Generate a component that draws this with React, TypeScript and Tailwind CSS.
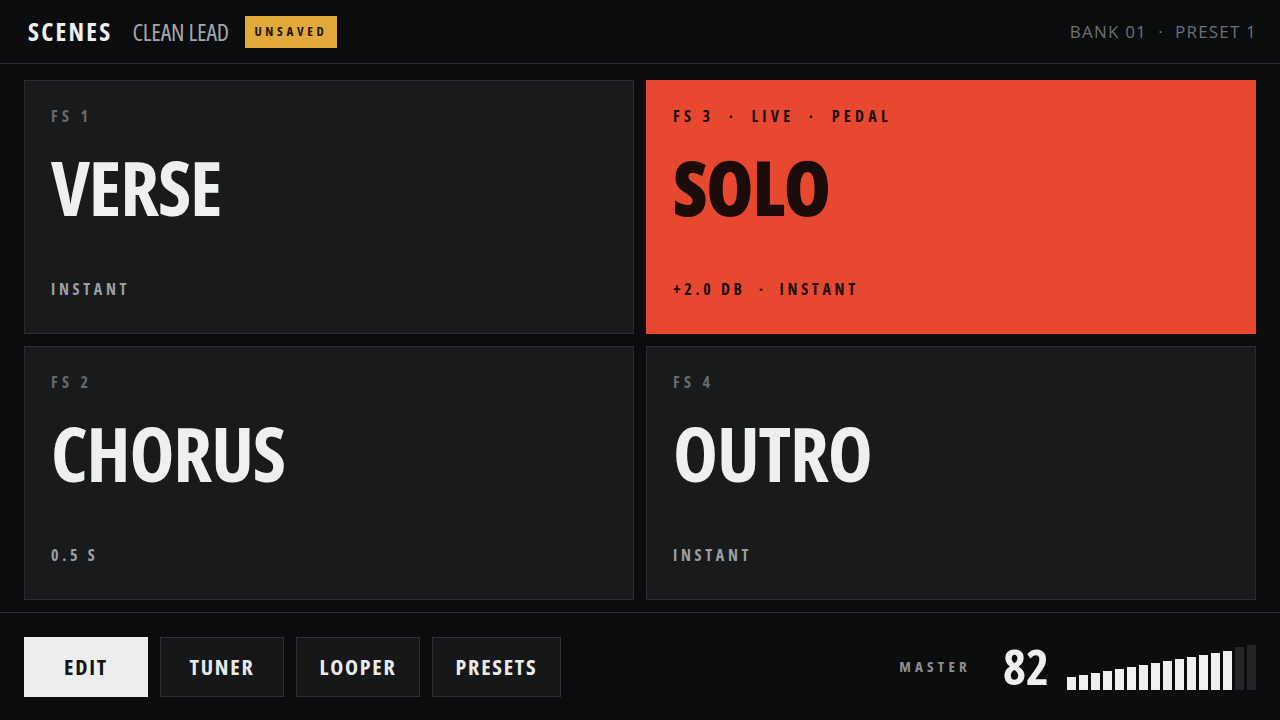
import React from 'react';

const FONT = '"Open Sans", sans-serif';

type Scene = {
  id: string;
  label: string;
  name: string;
  foot: string;
  active?: boolean;
};

const SCENES: Scene[] = [
  { id: 'fs1', label: 'FS 1', name: 'VERSE', foot: 'INSTANT' },
  { id: 'fs3', label: 'FS 3  ·  LIVE  ·  PEDAL', name: 'SOLO', foot: '+2.0 DB  ·  INSTANT', active: true },
  { id: 'fs2', label: 'FS 2', name: 'CHORUS', foot: '0.5 S' },
  { id: 'fs4', label: 'FS 4', name: 'OUTRO', foot: 'INSTANT' },
];

const TABS = [
  { key: 'edit', label: 'EDIT', w: 'w-[124px]' },
  { key: 'tuner', label: 'TUNER', w: 'w-[124px]' },
  { key: 'looper', label: 'LOOPER', w: 'w-[124px]' },
  { key: 'presets', label: 'PRESETS', w: 'w-[129px]' },
];

const LEVEL = 14; // lit segments out of 16

function SceneCard({ scene }: { scene: Scene }) {
  const on = scene.active;
  return (
    <div
      className={`flex flex-col px-[26px] pt-[25px] pb-[34px] border ${
        on ? 'bg-[#e8482f] border-[#e8482f] text-[#1b0c09]' : 'bg-[#181a1c] border-[#2b2d30] text-[#eeefef]'
      }`}
    >
      <div
        className={`text-[16px] font-bold tracking-[0.27em] leading-5 whitespace-pre ${
          on ? 'text-[#1b0c09]' : 'text-[#666a6e]'
        }`}
      >
        {scene.label}
      </div>
      <div
        className={`mt-[21px] text-[76px] leading-[80px] tracking-[-0.015em] ${
          on ? 'font-extrabold' : 'font-bold'
        }`}
      >
        {scene.name}
      </div>
      <div
        className={`mt-auto text-[16px] font-bold tracking-[0.23em] leading-5 whitespace-pre ${
          on ? 'text-[#1b0c09]' : 'text-[#9b9fa3]'
        }`}
      >
        {scene.foot}
      </div>
    </div>
  );
}

export default function App() {
  return (
    <div
      className="w-[1280px] h-[720px] bg-[#0b0c0e] flex flex-col overflow-hidden font-stretch-condensed"
      style={{ fontFamily: FONT }}
    >
      {/* Header */}
      <div className="h-[64px] flex items-center justify-between pl-[28px] pr-[23px] border-b border-[#2a2c2f]">
        <div className="flex items-center">
          <span className="text-[25px] font-bold tracking-[0.09em] leading-none text-[#eeefef]">SCENES</span>
          <span className="ml-[20px] text-[24px] font-normal leading-none tracking-[-0.01em] text-[#a3a7ab]">
            CLEAN LEAD
          </span>
          <span className="ml-[16px] h-[32px] w-[92px] flex items-center justify-center bg-[#e3a83a] text-[#1e1406] text-[13px] font-bold tracking-[0.28em]">
            UNSAVED
          </span>
        </div>
        <div className="text-[17px] tracking-[0.07em] text-[#6d7175] whitespace-pre font-stretch-normal">
          BANK 01  ·  PRESET 1
        </div>
      </div>

      {/* Scene grid */}
      <div className="flex-1 grid grid-cols-2 grid-rows-2 gap-[12px] px-[24px] pt-[16px] pb-[12px]">
        {SCENES.map((s) => (
          <SceneCard key={s.id} scene={s} />
        ))}
      </div>

      {/* Footer */}
      <div className="h-[108px] border-t border-[#2a2c2f] flex items-center justify-between px-[24px]">
        <div className="flex gap-[12px]">
          {TABS.map((t) => (
            <button
              key={t.key}
              type="button"
              className={`${t.w} h-[60px] text-[22px] font-bold tracking-[0.08em] border ${
                t.key === 'edit'
                  ? 'bg-[#eceeee] border-[#eceeee] text-[#121314]'
                  : 'bg-[#151719] border-[#2e3033] text-[#e9ebeb]'
              }`}
            >
              {t.label}
            </button>
          ))}
        </div>
        <div className="flex items-center">
          <span className="text-[15px] font-bold tracking-[0.28em] text-[#8b8f93]">MASTER</span>
          <span className="ml-[32px] text-[49px] font-bold leading-none text-[#eeefef]">82</span>
          <div className="ml-[18px] flex items-end gap-[3px] h-[44px] mt-[2px]">
            {Array.from({ length: 16 }).map((_, i) => (
              <div
                key={i}
                className={`w-[9px] ${i < LEVEL ? 'bg-[#eeefef]' : 'bg-[#232528]'}`}
                style={{ height: 13 + i * 2 + (i >= LEVEL ? 2 : 0) }}
              />
            ))}
          </div>
        </div>
      </div>
    </div>
  );
}
